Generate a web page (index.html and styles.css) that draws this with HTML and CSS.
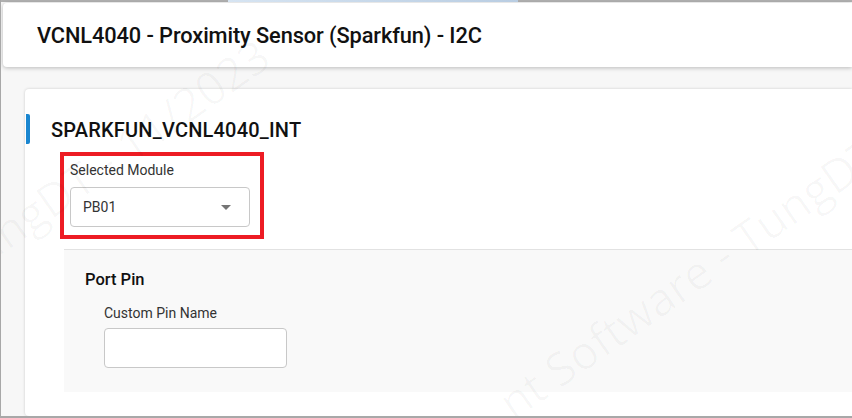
FILE: index.html
```html
<!DOCTYPE html>
<html>
<head>
<meta charset="utf-8">
<link rel="stylesheet" href="styles.css">
</head>
<body>
<div class="frame">
  <div class="topline"><span class="topline-seg"></span></div>
  <header class="header">
    <h1 class="header-title">VCNL4040 - Proximity Sensor (Sparkfun) - I2C</h1>
  </header>
  <main class="card">
    <div class="section-head">
      <span class="accent"></span>
      <h2 class="section-title">SPARKFUN_VCNL4040_INT</h2>
    </div>
    <div class="highlight">
      <label class="field-label">Selected Module</label>
      <div class="select">
        <span class="select-value">PB01</span>
        <svg class="select-arrow" width="10" height="5" viewBox="0 0 10 5"><path d="M0 0 L10 0 L5 5 Z" fill="#757575"/></svg>
      </div>
    </div>
    <section class="panel">
      <h3 class="panel-title">Port Pin</h3>
      <div class="panel-field">
        <label class="field-label">Custom Pin Name</label>
        <div class="text-input"></div>
      </div>
    </section>
  </main>
  <div class="watermark wm1">TungDT - 11/2023</div>
  <div class="watermark wm2">nt Software - TungDT</div>
</div>
</body>
</html>
```
FILE: styles.css
```css
html, body {
  margin: 0;
  padding: 0;
}
body {
  width: 852px;
  height: 418px;
  overflow: hidden;
  background: #f7f7f7;
  font-family: Roboto, "Liberation Sans", sans-serif;
  color: #1a1a1a;
}
.frame {
  position: relative;
  height: 418px;
  box-sizing: border-box;
  border-left: 1px solid #a8a8a8;
  border-bottom: 2px solid #a8a8a8;
  overflow: hidden;
}
.topline {
  height: 2px;
  background: #b0b0b0;
  display: flex;
}
.topline-seg {
  margin-left: 227px;
  width: 290px;
  height: 2px;
  background: linear-gradient(90deg, #d6e4f2, #b9cde2);
}
.header {
  margin: 1px 0 0 2px;
  height: 64px;
  background: #fff;
  border-radius: 4px 0 0 4px;
  box-shadow: 0 1px 4px rgba(0,0,0,0.25);
  display: flex;
  align-items: center;
  padding-left: 34px;
}
.header-title {
  margin: 0;
  font-size: 21.8px;
  font-weight: 500;
  color: #111;
  letter-spacing: -0.1px;
}
.card {
  margin: 22px 0 0 24px;
  height: 327px;
  background: #fff;
  border-radius: 4px 0 0 4px;
  box-shadow: 0 0 3px rgba(0,0,0,0.18);
  padding-top: 25px;
  box-sizing: border-box;
}
.section-head {
  display: flex;
  align-items: center;
  height: 30px;
}
.accent {
  width: 4px;
  height: 30px;
  background: #1a86d0;
  border-radius: 0 2px 2px 0;
  margin-left: 1px;
}
.section-title {
  margin: 2px 0 0 21px;
  font-size: 20px;
  font-weight: 500;
  color: #111;
  letter-spacing: 0.2px;
}
.highlight {
  margin: 8px 0 0 35px;
  width: 204px;
  height: 87px;
  box-sizing: border-box;
  border: 4px solid #ed1c24;
  padding: 6px 0 0 6px;
}
.field-label {
  display: block;
  font-size: 14px;
  color: #333;
  line-height: 16px;
}
.select {
  margin-top: 9px;
  width: 180px;
  height: 40px;
  box-sizing: border-box;
  border: 1px solid #c8c8c8;
  border-radius: 4px;
  display: flex;
  align-items: center;
  justify-content: space-between;
  padding: 0 18px 0 12px;
}
.select-value {
  font-size: 14px;
  color: #333;
}
.select-arrow {
  display: block;
}
.panel {
  margin: 10px 0 0 39px;
  height: 143px;
  background: #f9f9f9;
  border-top: 1px solid #e2e2e2;
  padding: 20px 0 0 21px;
  box-sizing: border-box;
}
.panel-title {
  margin: 0;
  font-size: 16.5px;
  font-weight: 500;
  color: #111;
  line-height: 20px;
}
.panel-field {
  margin: 15px 0 0 19px;
}
.text-input {
  margin-top: 7px;
  width: 183px;
  height: 40px;
  box-sizing: border-box;
  border: 1px solid #c8c8c8;
  border-radius: 4px;
  background: #fff;
}
.watermark {
  position: absolute;
  font-family: "Open Sans", "Liberation Sans", sans-serif;
  color: rgba(0,0,0,0.028);
  font-size: 46px;
  white-space: nowrap;
  transform: rotate(-35deg);
  transform-origin: left bottom;
  pointer-events: none;
}
.wm1 {
  left: -30px;
  top: 230px;
}
.wm2 {
  left: 520px;
  top: 370px;
}
```
